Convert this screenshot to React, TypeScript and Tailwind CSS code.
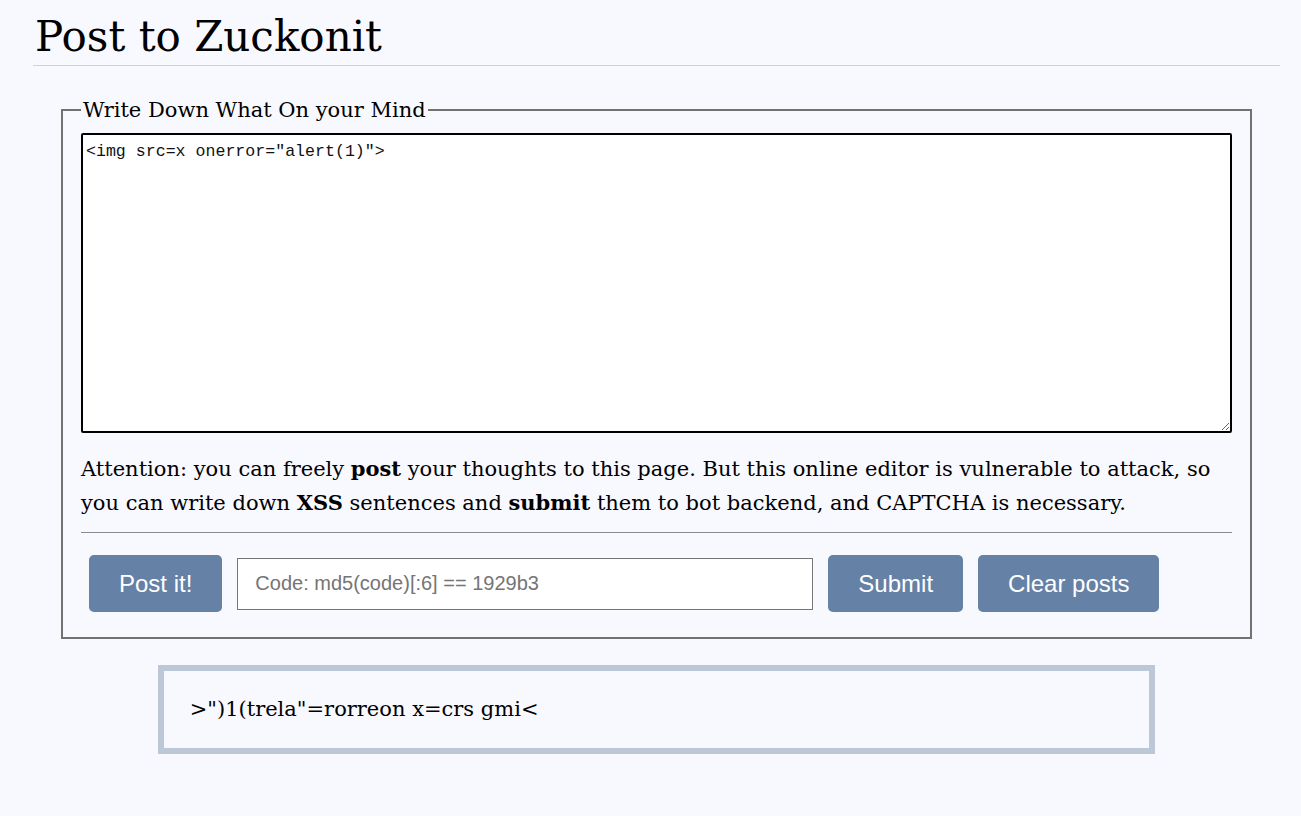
import React, { useState } from 'react'

// Post form for the Zuckonit board
const PostForm = () => {
  const [text, setText] = useState('<img src=x onerror="alert(1)">')
  const [code, setCode] = useState('')

  return (
    <fieldset className="mx-[28px] mt-[31px] border-2 border-[#727272] px-[18px] pb-[25px] pt-[10px]">
      <legend className="px-[2px] text-[21px] leading-[26px]">
        Write Down What On your Mind
      </legend>
      <textarea
        value={text}
        onChange={(e) => setText(e.target.value)}
        spellCheck={false}
        className="block h-[300px] w-full rounded-[2px] border-2 border-black bg-white px-[3px] pt-[6px] font-['Liberation_Mono',monospace] text-[16.6px] leading-[21px] text-[#111] outline-none"
      />
      <p className="mt-[19px] text-[21px] leading-[33px]">
        Attention: you can freely <b>post</b> your thoughts to this page. But
        this online editor is vulnerable to attack, so you can write down{' '}
        <b>XSS</b> sentences and <b>submit</b> them to bot backend, and CAPTCHA
        is necessary.
      </p>
      <hr className="mt-[12px] border-t border-[#8c8c8c]" />
      <div className="mt-[22px] flex items-center gap-[15px] pl-[8px] font-['Liberation_Sans',Arial,sans-serif]">
        <button className="rounded-[5px] bg-[#6581a6] px-[30px] py-[15px] text-[24px] leading-[27px] text-white">
          Post it!
        </button>
        <input
          value={code}
          onChange={(e) => setCode(e.target.value)}
          placeholder="Code: md5(code)[:6] == 1929b3"
          className="h-[52px] w-[576px] border border-[#767676] bg-white px-[17px] text-[20px] text-black outline-none placeholder:text-[#757575]"
        />
        <button className="rounded-[5px] bg-[#6581a6] px-[30px] py-[15px] text-[24px] leading-[27px] text-white">
          Submit
        </button>
        <button className="rounded-[5px] bg-[#6581a6] px-[30px] py-[15px] text-[24px] leading-[27px] text-white">
          Clear posts
        </button>
      </div>
    </fieldset>
  )
}

export default function App() {
  const posts = ['>")1(trela"=rorreon x=crs gmi<']

  return (
    <div className="min-h-[816px] bg-[#f8f8ff] font-['DejaVu_Serif',serif] text-black">
      <div className="ml-[33px] mr-[21px] pt-[10px]">
        <h1 className="border-b border-[#d0d0d8] pb-[2px] pl-[2px] text-[42px] leading-[53px]">
          Post to Zuckonit
        </h1>
        <PostForm />
        {posts.map((p, i) => (
          <div
            key={i}
            className="mx-auto mt-[26px] w-[80%] border-[6px] border-[#bcc8d8] px-[26px] py-[22px] text-[21px] leading-[33px]"
          >
            {p}
          </div>
        ))}
      </div>
    </div>
  )
}
